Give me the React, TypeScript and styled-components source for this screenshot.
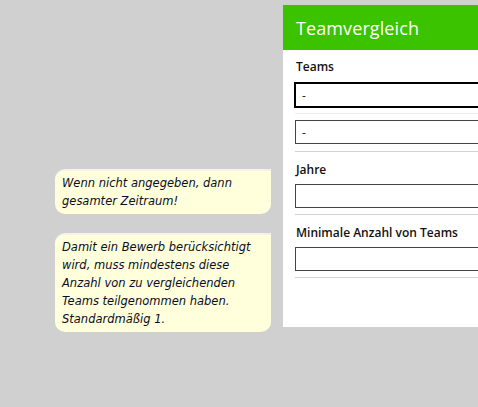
import React from "react";
import styled, { createGlobalStyle } from "styled-components";

const Global = createGlobalStyle`
  html, body {
    margin: 0;
    padding: 0;
    background: #d0d0d0;
    overflow: hidden;
  }
  body {
    font-family: "Open Sans", "Noto Sans", sans-serif;
  }
`;

const Page = styled.div`
  width: 478px;
  height: 407px;
  display: flex;
  align-items: flex-start;
`;

const Panel = styled.div`
  margin: 5px 0 0 283px;
  width: 320px;
  flex-shrink: 0;
  background: #ffffff;
  padding-bottom: 49px;
`;

const Header = styled.div`
  height: 45px;
  background: #3cc300;
  color: #ffffff;
  font-size: 18px;
  display: flex;
  align-items: center;
  padding-left: 13px;
  letter-spacing: 0.1px;
`;

const Section = styled.div`
  position: relative;
  padding: 0 0 0 12px;
`;

const Label = styled.div<{ $top: number; $gap: number }>`
  font-size: 12px;
  font-weight: 600;
  color: #111;
  line-height: 16px;
  padding-top: ${(p) => p.$top}px;
  margin-bottom: ${(p) => p.$gap}px;
  padding-left: 1px;
`;

const Field = styled.div<{ $focused?: boolean }>`
  height: 24px;
  box-sizing: border-box;
  border: 1px solid ${(p) => (p.$focused ? "#000" : "#444")};
  outline: ${(p) => (p.$focused ? "1px solid #000" : "none")};
  display: flex;
  align-items: center;
  padding-left: 6px;
  font-size: 12px;
  color: #222;
  background: #fff;
`;

const Divider = styled.div<{ $light?: boolean; $top: number; $bottom: number }>`
  height: 1px;
  background: ${(p) => (p.$light ? "#ececec" : "#d2d2d2")};
  margin-top: ${(p) => p.$top}px;
  margin-bottom: ${(p) => p.$bottom}px;
`;

const Tip = styled.div<{ $top: number }>`
  position: absolute;
  right: calc(100% + 12px);
  top: ${(p) => p.$top}px;
  width: 216px;
  box-sizing: border-box;
  background: #ffffdc;
  border-top: 2px solid #f2f2ee;
  border-radius: 10px 0 10px 10px;
  padding: 3px 6px 4px 7px;
  font-family: "DejaVu Sans", "Open Sans", sans-serif;
  font-size: 11.5px;
  line-height: 18px;
  font-style: italic;
  color: #0c0c24;
`;

export default function App() {
  return (
    <>
      <Global />
      <Page>
        <Panel>
          <Header>Teamvergleich</Header>
          <Section>
            <Label $top={9} $gap={8}>Teams</Label>
            <Field $focused>-</Field>
            <Divider $light $top={6} $bottom={6} />
            <Field>-</Field>
            <Divider $top={7} $bottom={0} />
          </Section>
          <Section>
            <Tip $top={17}>Wenn nicht angegeben, dann gesamter Zeitraum!</Tip>
            <Label $top={10} $gap={6}>Jahre</Label>
            <Field />
            <Divider $top={6} $bottom={0} />
          </Section>
          <Section>
            <Tip $top={18}>
              Damit ein Bewerb berücksichtigt wird, muss mindestens diese
              Anzahl von zu vergleichenden Teams teilgenommen haben.
              Standardmäßig 1.
            </Tip>
            <Label $top={10} $gap={6}>Minimale Anzahl von Teams</Label>
            <Field />
            <Divider $top={6} $bottom={0} />
          </Section>
        </Panel>
      </Page>
    </>
  );
}
